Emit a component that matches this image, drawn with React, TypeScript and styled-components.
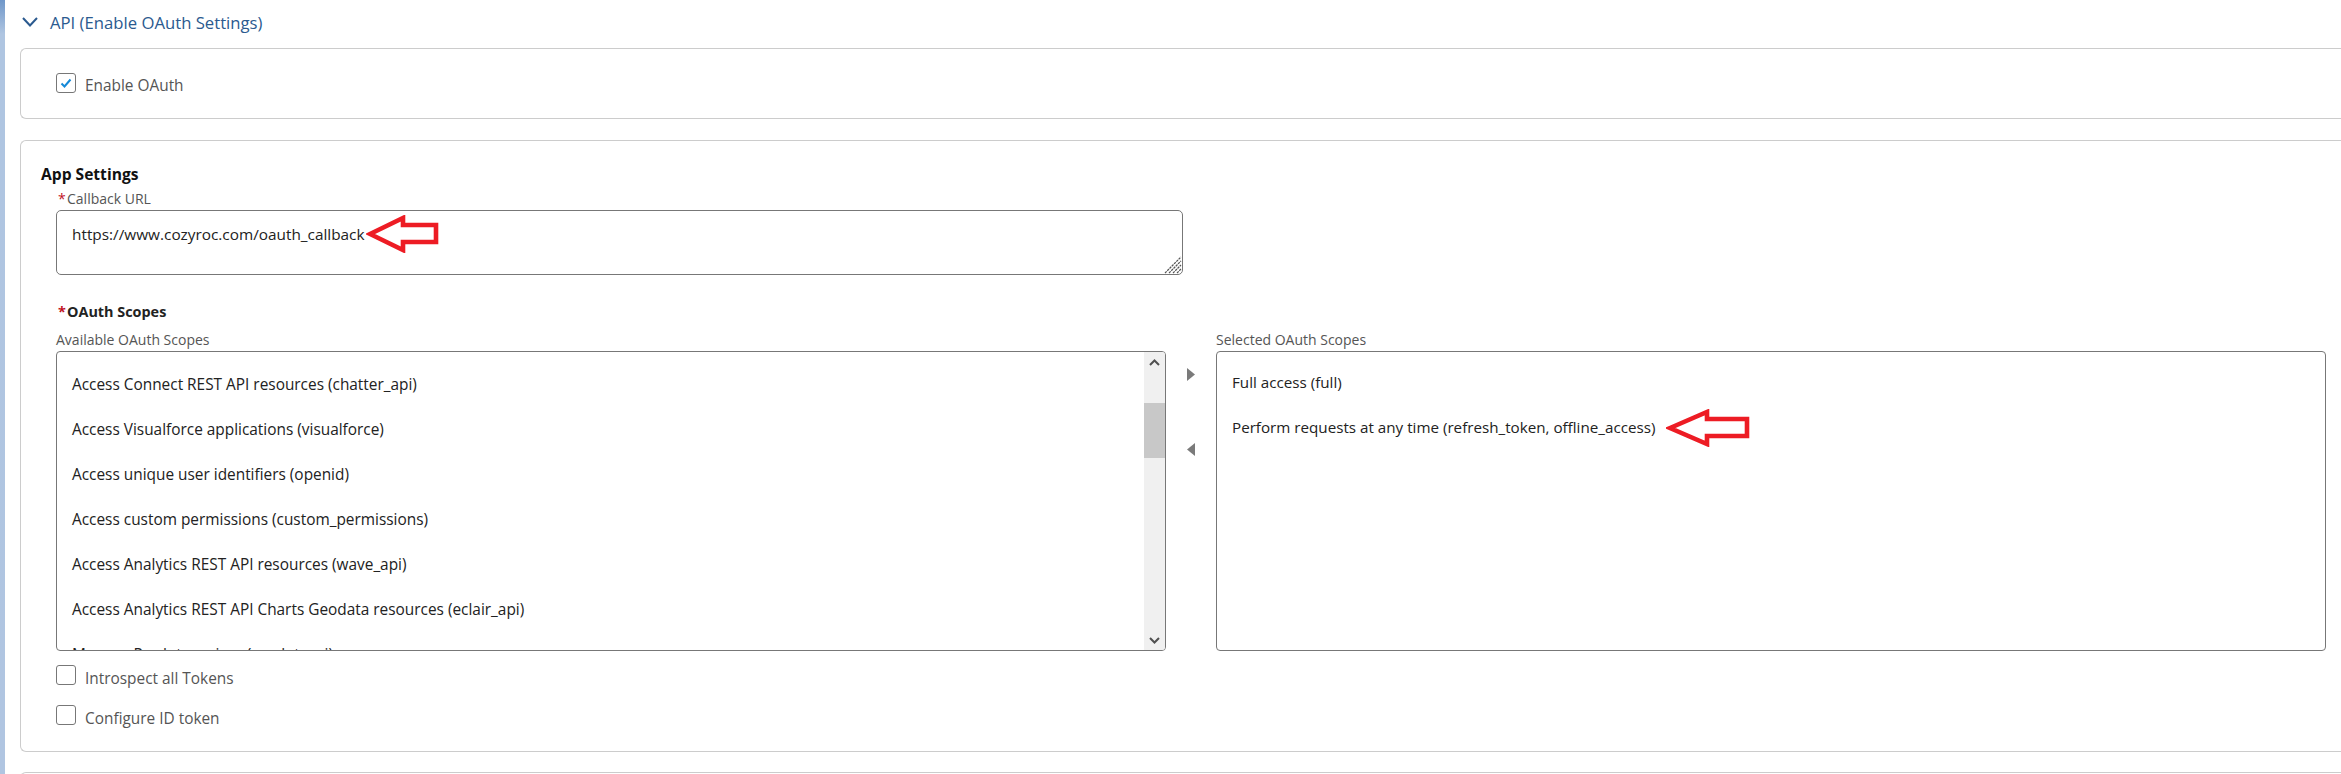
import styled, { createGlobalStyle } from "styled-components";

const AVAILABLE_SCOPES = [
  "Access Connect REST API resources (chatter_api)",
  "Access Visualforce applications (visualforce)",
  "Access unique user identifiers (openid)",
  "Access custom permissions (custom_permissions)",
  "Access Analytics REST API resources (wave_api)",
  "Access Analytics REST API Charts Geodata resources (eclair_api)",
  "Manage Pardot services (pardot_api)",
];

const SELECTED_SCOPES = [
  "Full access (full)",
  "Perform requests at any time (refresh_token, offline_access)",
];

function Checkbox({ checked }: { checked?: boolean }) {
  return (
    <CheckBoxSquare>
      {checked && (
        <svg width="12" height="10" viewBox="0 0 12 10">
          <path d="M1.5 5.5 L4.5 8.5 L10.5 1.5" fill="none" stroke="#1589d8" strokeWidth="2" />
        </svg>
      )}
    </CheckBoxSquare>
  );
}

function RedArrow({ head, length }: { head: number; length: number }) {
  return (
    <svg width={length + 4} height="38" viewBox={`0 0 ${length + 4} 38`}>
      <path
        d={`M4 19 L${head} 3 L${head} 10 L${length} 10 L${length} 27 L${head} 27 L${head} 35 Z`}
        fill="#fff"
        stroke="#ed1c24"
        strokeWidth="4.6"
      />
    </svg>
  );
}

function App() {
  return (
    <>
      <GlobalStyle />
      <Page>
        <SideStrip />
        <Main>
          <SectionHeader>
            <svg width="16" height="10" viewBox="0 0 16 10">
              <path d="M1 1 L8 8.5 L15 1" fill="none" stroke="#2b5a8f" strokeWidth="2" />
            </svg>
            <SectionTitle>API (Enable OAuth Settings)</SectionTitle>
          </SectionHeader>

          <Card $height={71}>
            <EnableRow>
              <Checkbox checked />
              <CheckLabel $offset={3}>Enable OAuth</CheckLabel>
            </EnableRow>
          </Card>

          <Card $height={612}>
            <CardHeading>App Settings</CardHeading>
            <Form>
              <FieldLabel>
                <Required>*</Required>Callback URL
              </FieldLabel>
              <TextAreaWrap>
                <CallbackInput>https://www.cozyroc.com/oauth_callback</CallbackInput>
                <OverGrip width="18" height="18" viewBox="0 0 18 18">
                  <path
                    d="M1 17 L17 1 M5 17 L17 5 M9 17 L17 9 M13 17 L17 13"
                    stroke="#555"
                    strokeWidth="1.2"
                    strokeDasharray="2.4 0.8"
                  />
                </OverGrip>
                <UrlArrow>
                  <RedArrow head={37} length={70} />
                </UrlArrow>
              </TextAreaWrap>

              <ScopesTitle>
                <Required>*</Required>OAuth Scopes
              </ScopesTitle>

              <ScopesGrid>
                <ScopeColumn>
                  <ColumnLabel>Available OAuth Scopes</ColumnLabel>
                  <ListBox>
                    <ScopeItems $top={10}>
                      {AVAILABLE_SCOPES.map((scope) => (
                        <ScopeItem key={scope} $size={15.4}>
                          {scope}
                        </ScopeItem>
                      ))}
                    </ScopeItems>
                    <ScrollTrack>
                      <svg width="21" height="21" viewBox="0 0 21 21">
                        <path d="M6 13 L10.5 8.5 L15 13" fill="none" stroke="#505050" strokeWidth="2" />
                      </svg>
                      <ScrollThumb />
                      <svg width="21" height="21" viewBox="0 0 21 21">
                        <path d="M6 9 L10.5 13.5 L15 9" fill="none" stroke="#505050" strokeWidth="2" />
                      </svg>
                    </ScrollTrack>
                  </ListBox>
                </ScopeColumn>

                <Movers>
                  <svg width="8" height="13" viewBox="0 0 8 13">
                    <path d="M0 0 L8 6.5 L0 13 Z" fill="#7a7a7a" />
                  </svg>
                  <svg width="8" height="13" viewBox="0 0 8 13">
                    <path d="M8 0 L0 6.5 L8 13 Z" fill="#7a7a7a" />
                  </svg>
                </Movers>

                <ScopeColumn>
                  <ColumnLabel>Selected OAuth Scopes</ColumnLabel>
                  <ListBox>
                    <ScopeItems $top={8}>
                      {SELECTED_SCOPES.map((scope) => (
                        <ScopeItem key={scope} $size={15.2}>
                          {scope}
                        </ScopeItem>
                      ))}
                    </ScopeItems>
                    <ScopeArrow>
                      <RedArrow head={41} length={81} />
                    </ScopeArrow>
                  </ListBox>
                </ScopeColumn>
              </ScopesGrid>

              <OptionRow $top={14}>
                <Checkbox />
                <CheckLabel $offset={4}>Introspect all Tokens</CheckLabel>
              </OptionRow>
              <OptionRow $top={16}>
                <Checkbox />
                <CheckLabel $offset={4}>Configure ID token</CheckLabel>
              </OptionRow>
            </Form>
          </Card>

          <Card $height={60} />
        </Main>
      </Page>
    </>
  );
}

export default App;

const GlobalStyle = createGlobalStyle`
  html, body {
    margin: 0;
    padding: 0;
    background: #ffffff;
    overflow: hidden;
  }

  * {
    box-sizing: border-box;
  }
`;

const Page = styled.div`
  display: flex;
  width: 2341px;
  height: 774px;
  overflow: hidden;
  font-family: "Open Sans", "Liberation Sans", sans-serif;
  background: #fff;
`;

const SideStrip = styled.div`
  flex: 0 0 5px;
  background: linear-gradient(to bottom, #6f97c9 0, #afc5e1 34px, #b0c5e1 100%);
`;

const Main = styled.div`
  flex: 1;
  min-width: 0;
`;

const SectionHeader = styled.div`
  display: flex;
  align-items: center;
  gap: 12px;
  height: 48px;
  padding: 0 0 4px 17px;
`;

const SectionTitle = styled.span`
  font-size: 16.7px;
  color: #2b5a8f;
`;

const Card = styled.div<{ $height: number }>`
  height: ${(props) => props.$height}px;
  margin: 0 0 20.5px 15px;
  border: 1.5px solid #cccccc;
  border-right: none;
  border-radius: 6px 0 0 6px;
`;

const EnableRow = styled.div`
  display: flex;
  gap: 9px;
  padding: 24px 0 0 35px;
`;

const CheckBoxSquare = styled.span`
  display: flex;
  align-items: center;
  justify-content: center;
  flex: 0 0 20px;
  width: 20px;
  height: 20px;
  border: 1px solid #777;
  border-radius: 3px;
  background: #fff;
`;

const CheckLabel = styled.span<{ $offset: number }>`
  padding-top: ${(props) => props.$offset}px;
  font-size: 15.4px;
  line-height: 20px;
  color: #555;
`;

const CardHeading = styled.div`
  padding: 23px 0 0 20px;
  font-size: 15.6px;
  font-weight: 700;
  line-height: 20px;
  color: #111;
`;

const Form = styled.div`
  padding: 0 0 0 35px;
`;

const Required = styled.span`
  display: inline-block;
  width: 11px;
  padding-left: 2px;
  color: #c1121f;
`;

const FieldLabel = styled.div`
  margin-top: 6px;
  font-size: 14px;
  line-height: 18px;
  color: #555;
`;

const TextAreaWrap = styled.div`
  position: relative;
  width: 1127px;
  height: 65.5px;
  margin-top: 2px;
`;

const CallbackInput = styled.div`
  width: 100%;
  height: 100%;
  padding: 13px 15px;
  border: 1.5px solid #777;
  border-radius: 5px;
  font-size: 15.35px;
  line-height: 20px;
  color: #222;
`;

const OverGrip = styled.svg`
  position: absolute;
  right: 1px;
  bottom: 1px;
`;

const UrlArrow = styled.div`
  position: absolute;
  left: 310px;
  top: 5px;
`;

const ScopesTitle = styled.div`
  margin-top: 26.5px;
  font-size: 14.4px;
  font-weight: 700;
  line-height: 20px;
  color: #222;
`;

const ScopesGrid = styled.div`
  display: grid;
  grid-template-columns: 1110px 50px 1110px;
  margin-top: 9px;
`;

const ScopeColumn = styled.div`
  min-width: 0;
`;

const ColumnLabel = styled.div`
  height: 20px;
  font-size: 14px;
  line-height: 18px;
  color: #555;
`;

const ListBox = styled.div`
  position: relative;
  display: flex;
  height: 300px;
  overflow: hidden;
  border: 1.5px solid #777;
  border-radius: 4px;
`;

const ScopeItems = styled.div<{ $top: number }>`
  flex: 1;
  min-width: 0;
  padding: ${(props) => props.$top}px 0 0 15px;
`;

const ScopeItem = styled.div<{ $size: number }>`
  height: 45px;
  font-size: ${(props) => props.$size}px;
  line-height: 45px;
  color: #222;
`;

const ScrollTrack = styled.div`
  display: flex;
  flex-direction: column;
  justify-content: space-between;
  flex: 0 0 21px;
  position: relative;
  background: #f0f0f0;
`;

const ScrollThumb = styled.div`
  position: absolute;
  top: 51px;
  left: 0;
  width: 100%;
  height: 55px;
  background: #c8c8c8;
`;

const ScopeArrow = styled.div`
  position: absolute;
  left: 449px;
  top: 57px;
`;

const Movers = styled.div`
  display: flex;
  flex-direction: column;
  align-items: center;
  gap: 62px;
  padding-top: 37px;

  svg {
    flex: 0 0 13px;
  }
`;

const OptionRow = styled.div<{ $top: number }>`
  display: flex;
  gap: 9px;
  margin-top: ${(props) => props.$top}px;
`;
